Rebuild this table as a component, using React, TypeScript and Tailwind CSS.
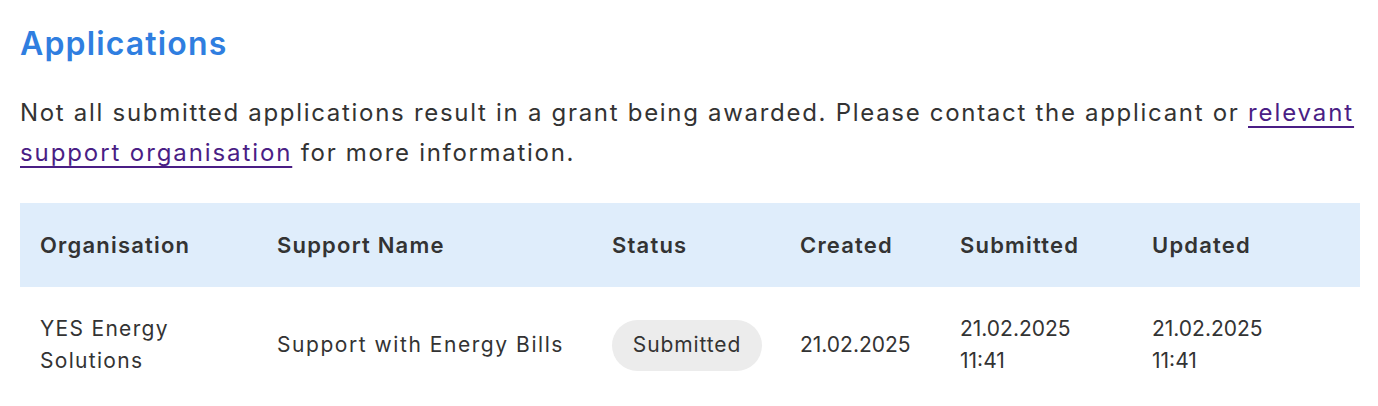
import React from "react";

const font = { fontFamily: "Inter, 'Noto Sans', sans-serif" };

export default function App() {
  return (
    <div className="bg-white w-[1378px] h-[406px] px-5 pt-[22px] text-[#333333]" style={font}>
      <h1 className="text-[32px] leading-[44px] font-semibold tracking-[1.15px] text-[#2f7ee0]">Applications</h1>
      <p className="mt-[27px] text-[24px] leading-[40px] tracking-[1.7px]">
        Not all submitted applications result in a grant being awarded. Please contact the applicant or{" "}
        <a href="#" className="text-[#4a1e85] underline underline-offset-[5px] decoration-[2px] tracking-[1.9px]">
          relevant support organisation
        </a>{" "}
        for more information.
      </p>
      <div className="mt-[30px] w-[1340px]">
        <div className="grid grid-cols-[237px_335px_188px_160px_192px_1fr] bg-[#dfedfb] h-[84px] items-center text-[22px] font-semibold tracking-[1.2px]">
          <div className="pl-5">Organisation</div>
          <div className="pl-5">Support Name</div>
          <div className="pl-5">Status</div>
          <div className="pl-5">Created</div>
          <div className="pl-5">Submitted</div>
          <div className="pl-5">Updated</div>
        </div>
        <div className="grid grid-cols-[237px_335px_188px_160px_192px_1fr] h-[116px] items-center text-[21px] leading-[32px]">
          <div className="pl-5 tracking-[1.3px]">YES Energy<br />Solutions</div>
          <div className="pl-5 tracking-[1.55px]">Support with Energy Bills</div>
          <div className="pl-5">
            <span className="inline-flex items-center justify-center h-[51px] w-[150px] rounded-full bg-[#ececec] tracking-[0.9px]">Submitted</span>
          </div>
          <div className="pl-5">21.02.2025</div>
          <div className="pl-5">21.02.2025<br />11:41</div>
          <div className="pl-5">21.02.2025<br />11:41</div>
        </div>
      </div>
    </div>
  );
}
